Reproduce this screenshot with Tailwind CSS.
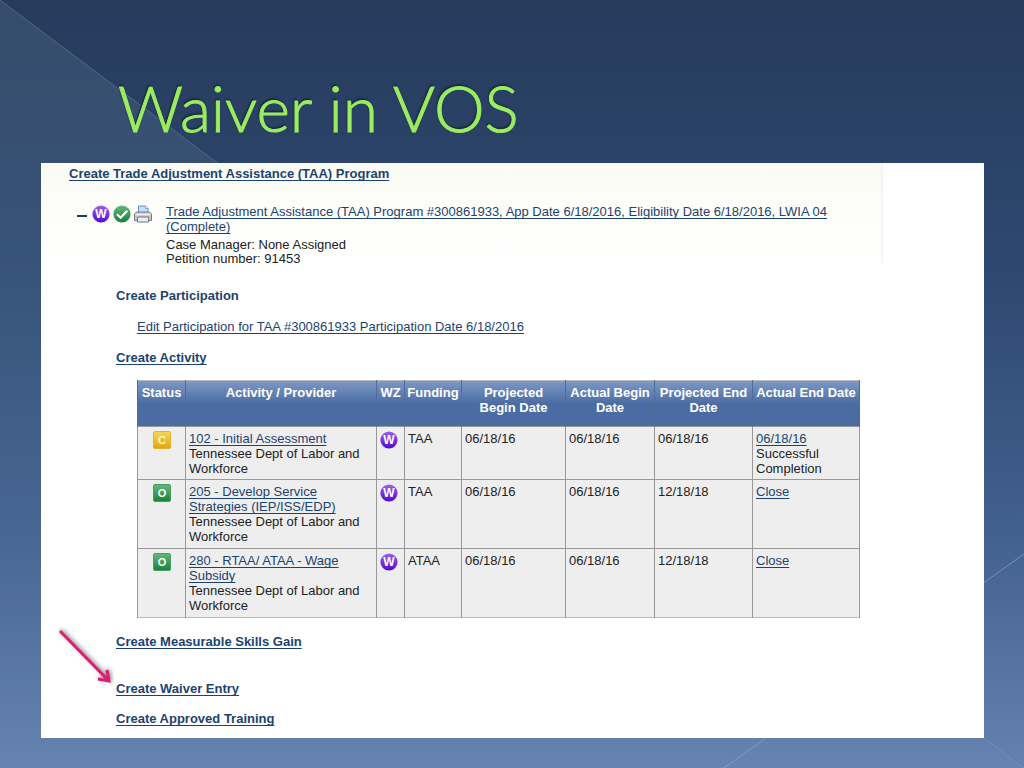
<!DOCTYPE html>
<html lang="en">
<head>
  <meta charset="UTF-8" />
  <meta name="viewport" content="width=device-width, initial-scale=1.0" />
  <title>Waiver in VOS</title>
  <script src="https://cdn.jsdelivr.net/npm/@tailwindcss/browser@4"></script>
</head>
<body class="relative min-h-screen flex flex-col bg-[linear-gradient(#273b5c,#2d4870_35%,#43618f_70%,#6581b0)]">
  <!-- Slide background shapes -->
  <svg class="absolute inset-0 w-full h-full" viewBox="0 0 1024 768" preserveAspectRatio="none" aria-hidden="true">
    <defs>
      <linearGradient id="wedge" x1="0" y1="0" x2="0" y2="1">
        <stop offset="0" stop-color="#6b8a9c" stop-opacity=".22" />
        <stop offset="0.5" stop-color="#6f93b5" stop-opacity=".13" />
        <stop offset="1" stop-color="#7fa3bd" stop-opacity=".06" />
      </linearGradient>
    </defs>
    <path d="M0 0L1024 768H0z" fill="url(#wedge)" />
    <path d="M0 0L1024 768" stroke="#8ba3bd" stroke-opacity=".35" stroke-width="1" />
    <path d="M724 768L1024 554" stroke="#a4bcd8" stroke-opacity=".5" stroke-width="1" />
  </svg>

  <!-- Shared icons -->
  <svg class="absolute w-0 h-0" aria-hidden="true">
    <defs>
      <linearGradient id="purple" x1="0" y1="0" x2="0" y2="1"><stop offset="0" stop-color="#9a62ea" /><stop offset=".5" stop-color="#7a35dc" /><stop offset="1" stop-color="#5209cc" /></linearGradient>
      <linearGradient id="green" x1="0" y1="0" x2="0" y2="1"><stop offset="0" stop-color="#66b77c" /><stop offset="1" stop-color="#178238" /></linearGradient>
      <linearGradient id="gold" x1="0" y1="0" x2="0" y2="1"><stop offset="0" stop-color="#f5d75a" /><stop offset="1" stop-color="#dfa70c" /></linearGradient>
    </defs>
    <symbol id="icon-w" viewBox="0 0 18 18">
      <circle cx="9" cy="9" r="8.6" fill="url(#purple)" />
      <text x="9" y="13" text-anchor="middle" font-family="Liberation Sans, sans-serif" font-size="12" font-weight="bold" fill="#fff">W</text>
    </symbol>
    <symbol id="icon-check" viewBox="0 0 18 18">
      <circle cx="9" cy="9" r="8.6" fill="url(#green)" />
      <path d="M4 9.2L7.6 12.7L14.2 5.8" fill="none" stroke="#fff" stroke-width="2.3" />
    </symbol>
    <symbol id="icon-print" viewBox="0 0 18 18">
      <path d="M4.5 8V1h7l2.5 2.5V8z" fill="#c4e0fa" stroke="#6390c4" />
      <path d="M11.5 1v2.5H14" fill="#fff" stroke="#6390c4" stroke-width=".7" />
      <path d="M2.5 7h13l2 2v6.5h-17V9z" fill="#c4c6ca" stroke="#777b83" />
      <path d="M1.2 9.5h15.6" stroke="#eef0f2" stroke-width="1.4" />
      <path d="M3.5 12h11v5h-11z" fill="#e5edf5" stroke="#747982" />
    </symbol>
    <symbol id="icon-c" viewBox="0 0 18 18">
      <rect x=".5" y=".5" width="17" height="17" rx="1.5" fill="url(#gold)" stroke="#dfb233" />
      <text x="9" y="13" text-anchor="middle" font-family="Liberation Sans, sans-serif" font-size="11" font-weight="bold" fill="#fff4c4">C</text>
    </symbol>
    <symbol id="icon-o" viewBox="0 0 18 18">
      <rect x=".5" y=".5" width="17" height="17" rx="1.5" fill="url(#green)" stroke="#4b9c60" />
      <text x="9" y="13" text-anchor="middle" font-family="Liberation Sans, sans-serif" font-size="11" font-weight="bold" fill="#fff">O</text>
    </symbol>
  </svg>

  <header class="relative pl-[118px] pt-[72px] pb-[19px]">
    <h1 class="font-[Lato,sans-serif] font-light text-[64px] leading-[72px] text-[#9aec60] [-webkit-text-stroke:1px_#9aec60] [text-shadow:-1px_-2px_2px_#15262f]">Waiver in VOS</h1>
  </header>

  <main class="relative flex-1 ml-[41px] mr-10 mb-[30px] bg-white font-['Liberation_Sans',Arial,sans-serif] text-[13px] leading-[15px] text-[#222]">
    <div class="absolute top-0 left-0 right-[101px] h-[100px] border-r-2 border-[#f4f4f1] bg-linear-to-b from-[#fbfbf5] to-white"></div>

    <div class="relative pt-[3px] pb-3 pr-[124px] [&_a]:text-[#1c436f] [&_a]:underline [&_a]:underline-offset-2 [&_a]:[text-decoration-skip-ink:none]">
      <a href="#" class="block w-fit ml-7 font-bold">Create Trade Adjustment Assistance (TAA) Program</a>

      <section class="flex items-start mt-[23px] ml-9">
        <div class="flex items-center gap-[3px] mt-px mr-[14px]">
          <button type="button" aria-label="Collapse" class="w-3 h-[18px] flex items-center"><span class="w-[10px] h-[2px] mt-1 bg-[#173f66]"></span></button>
          <svg class="w-[18px] h-[18px]" role="img" aria-label="WZ"><use href="#icon-w" /></svg>
          <svg class="w-[18px] h-[18px]" role="img" aria-label="Complete"><use href="#icon-check" /></svg>
          <svg class="w-[18px] h-[18px]" role="img" aria-label="Print"><use href="#icon-print" /></svg>
        </div>
        <div class="flex-1 -mr-5">
          <a href="#">Trade Adjustment Assistance (TAA) Program #300861933, App Date 6/18/2016, Eligibility Date 6/18/2016, LWIA 04 (Complete)</a>
          <p class="mt-1 leading-[14px]">Case Manager: None Assigned<br>Petition number: 91453</p>
        </div>
      </section>

      <h2 class="mt-[22px] ml-[75px] font-bold text-[#1c436f]">Create Participation</h2>
      <a href="#" class="block w-fit mt-4 ml-24">Edit Participation for TAA #300861933 Participation Date 6/18/2016</a>
      <a href="#" class="block w-fit mt-4 ml-[75px] font-bold">Create Activity</a>

      <div class="mt-[15px] ml-24">
        <table class="w-full table-fixed border-collapse bg-[#eee] border border-[#bbb] [&_td]:border-x [&_td]:border-t [&_td]:border-[#999] [&_td]:px-[3px] [&_td]:pt-1 [&_td]:pb-[3px] [&_td]:align-top [&_th]:border-x [&_th]:border-[#526c99] [&_th]:pt-1 [&_th]:align-top">
          <colgroup>
            <col class="w-12"><col><col class="w-7"><col class="w-[57px]"><col class="w-[104px]"><col class="w-[89px]"><col class="w-[98px]"><col class="w-[107px]">
          </colgroup>
          <thead class="text-white">
            <tr class="h-[46px] bg-linear-to-b from-[#7d98c6] via-[#4b6ca2] via-50% to-[#4b6ca2]">
              <th>Status</th>
              <th>Activity / Provider</th>
              <th>WZ</th>
              <th>Funding</th>
              <th>Projected<br>Begin Date</th>
              <th>Actual Begin<br>Date</th>
              <th>Projected End<br>Date</th>
              <th>Actual End Date</th>
            </tr>
          </thead>
          <tbody>
            <tr>
              <td><svg class="w-[18px] h-[18px] mx-auto" role="img" aria-label="Closed"><use href="#icon-c" /></svg></td>
              <td><a href="#">102 - Initial Assessment</a><br>Tennessee Dept of Labor and Workforce</td>
              <td><svg class="w-[18px] h-[18px]" role="img" aria-label="WZ"><use href="#icon-w" /></svg></td>
              <td>TAA</td>
              <td>06/18/16</td>
              <td>06/18/16</td>
              <td>06/18/16</td>
              <td><a href="#">06/18/16</a><br>Successful<br>Completion</td>
            </tr>
            <tr class="h-[69px]">
              <td><svg class="w-[18px] h-[18px] mx-auto" role="img" aria-label="Open"><use href="#icon-o" /></svg></td>
              <td><a href="#">205 - Develop Service<br>Strategies (IEP/ISS/EDP)</a><br>Tennessee Dept of Labor and Workforce</td>
              <td><svg class="w-[18px] h-[18px]" role="img" aria-label="WZ"><use href="#icon-w" /></svg></td>
              <td>TAA</td>
              <td>06/18/16</td>
              <td>06/18/16</td>
              <td>12/18/18</td>
              <td><a href="#">Close</a></td>
            </tr>
            <tr class="h-[69px]">
              <td><svg class="w-[18px] h-[18px] mx-auto" role="img" aria-label="Open"><use href="#icon-o" /></svg></td>
              <td><a href="#">280 - RTAA/ ATAA - Wage<br>Subsidy</a><br>Tennessee Dept of Labor and Workforce</td>
              <td><svg class="w-[18px] h-[18px]" role="img" aria-label="WZ"><use href="#icon-w" /></svg></td>
              <td>ATAA</td>
              <td>06/18/16</td>
              <td>06/18/16</td>
              <td>12/18/18</td>
              <td><a href="#">Close</a></td>
            </tr>
          </tbody>
        </table>
      </div>

      <div class="ml-[75px] mt-4 font-bold">
        <a href="#" class="block w-fit">Create Measurable Skills Gain</a>
        <div class="relative mt-8">
          <a href="#" class="block w-fit">Create Waiver Entry</a>
          <!-- Pointer to the waiver link -->
          <svg class="absolute right-full bottom-2 w-16 h-16 drop-shadow-[1px_-1px_2px_#777]" viewBox="0 0 64 64" fill="none" stroke="#e01b70" stroke-width="3" aria-hidden="true">
            <path d="M8 7L56 56" />
            <path d="M55 46L57 57L46 55" />
          </svg>
        </div>
        <a href="#" class="block w-fit mt-[15px]">Create Approved Training</a>
      </div>
    </div>
  </main>
</body>
</html>
